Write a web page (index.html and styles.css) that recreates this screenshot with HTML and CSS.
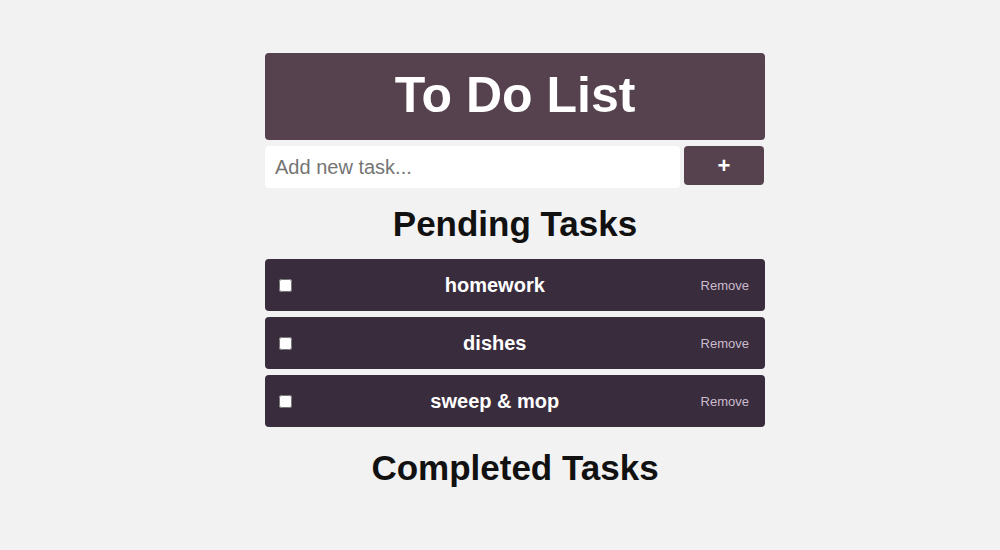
FILE: index.html
```html
<!DOCTYPE html>
<html lang="en">
<head>
<meta charset="utf-8">
<title>To Do List</title>
<link rel="stylesheet" href="styles.css">
</head>
<body>
<main class="app">
  <header class="app-header">
    <h1 class="app-title">To Do List</h1>
  </header>
  <form class="add-form" onsubmit="return false;">
    <input class="add-input" type="text" placeholder="Add new task...">
    <button class="add-btn" type="submit">+</button>
  </form>
  <h2 class="section-title section-pending">Pending Tasks</h2>
  <ul class="task-list">
    <li class="task">
      <input class="task-check" type="checkbox">
      <span class="task-name">homework</span>
      <button class="task-remove" type="button">Remove</button>
    </li>
    <li class="task">
      <input class="task-check" type="checkbox">
      <span class="task-name">dishes</span>
      <button class="task-remove" type="button">Remove</button>
    </li>
    <li class="task">
      <input class="task-check" type="checkbox">
      <span class="task-name">sweep &amp; mop</span>
      <button class="task-remove" type="button">Remove</button>
    </li>
  </ul>
  <h2 class="section-title section-completed">Completed Tasks</h2>
</main>
</body>
</html>
```

FILE: styles.css
```css
* { box-sizing: border-box; }

html, body {
  margin: 0;
  padding: 0;
  background: #f2f2f2;
  font-family: "Liberation Sans", Arial, Helvetica, sans-serif;
  color: #111;
}

body {
  padding-left: 30px;
}

.app {
  width: 500px;
  margin: 53px auto 0;
}

.app-header {
  height: 87px;
  background: #56414f;
  border-radius: 4px;
  display: flex;
  align-items: center;
  justify-content: center;
}

.app-title {
  margin: 0;
  font-size: 50px;
  font-weight: bold;
  color: #fff;
  line-height: 1;
  transform: translateY(-2px);
}

.add-form {
  display: flex;
  align-items: flex-start;
  gap: 4px;
  margin-top: 6px;
}

.add-input {
  flex: 1;
  height: 42px;
  border: none;
  border-radius: 4px;
  background: #fff;
  padding: 0 10px;
  font-family: "Liberation Sans", Arial, sans-serif;
  font-size: 20px;
  color: #333;
  outline: none;
}

.add-input::placeholder { color: #757575; }

.add-btn {
  width: 80px;
  height: 39px;
  border: none;
  border-radius: 4px;
  background: #56414f;
  color: #fff;
  font-family: "Liberation Sans", Arial, sans-serif;
  font-size: 22px;
  font-weight: bold;
  line-height: 1;
  padding: 0;
  margin-right: 1px;
}

.section-title {
  margin: 0;
  text-align: center;
  font-size: 35px;
  font-weight: bold;
  line-height: 40px;
  color: #111;
}

.section-pending {
  margin-top: 16px;
  margin-bottom: 15px;
}

.section-completed {
  margin-top: 21px;
}

.task-list {
  list-style: none;
  margin: 0;
  padding: 0;
  display: flex;
  flex-direction: column;
  gap: 6px;
}

.task {
  height: 52px;
  background: #392c3d;
  border-radius: 4px;
  display: flex;
  align-items: center;
  padding: 0 10px;
}

.task-check {
  width: 13px;
  height: 13px;
  margin: 0 3px 0 4px;
}

.task-name {
  flex: 1;
  text-align: center;
  color: #fff;
  font-size: 20px;
  font-weight: bold;
}

.task-remove {
  background: transparent;
  border: none;
  padding: 4px 6px;
  font-family: "Liberation Sans", Arial, sans-serif;
  font-size: 13px;
  color: #cbbbcd;
  cursor: pointer;
}
```
